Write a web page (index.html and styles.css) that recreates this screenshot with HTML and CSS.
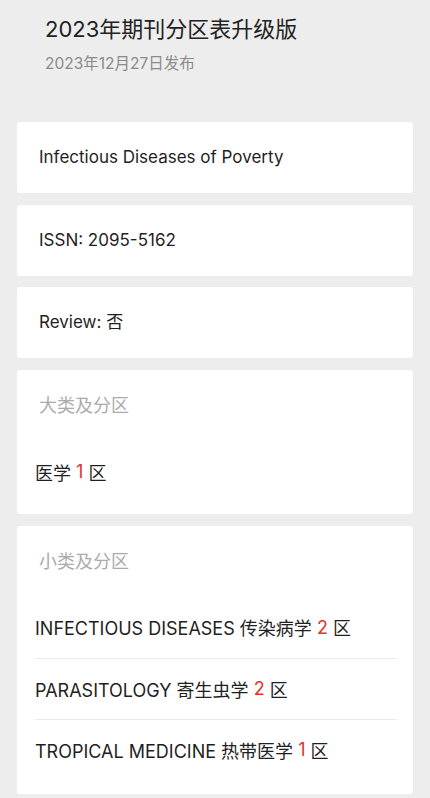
FILE: index.html
```html
<!DOCTYPE html>
<html lang="zh">
<head>
<meta charset="utf-8">
<title>2023年期刊分区表升级版</title>
<link rel="stylesheet" href="styles.css">
</head>
<body>
<div class="page">
  <header class="head">
    <h1 class="title">2023年期刊分区表升级版</h1>
    <div class="date">2023年12月27日发布</div>
  </header>
  <section class="card simple">Infectious Diseases of Poverty</section>
  <section class="card simple">ISSN: 2095-5162</section>
  <section class="card simple">Review: 否</section>
  <section class="card group">
    <div class="label">大类及分区</div>
    <div class="rows">
      <div class="row">医学 <span class="zone">1</span> 区</div>
    </div>
  </section>
  <section class="card group last">
    <div class="label">小类及分区</div>
    <div class="rows">
      <div class="row">INFECTIOUS DISEASES 传染病学 <span class="zone">2</span> 区</div>
      <div class="row">PARASITOLOGY 寄生虫学 <span class="zone">2</span> 区</div>
      <div class="row">TROPICAL MEDICINE 热带医学 <span class="zone">1</span> 区</div>
    </div>
  </section>
</div>
</body>
</html>
```

FILE: styles.css
```css
* { box-sizing: border-box; }
html, body { margin: 0; padding: 0; }
body {
  background: #ededed;
  font-family: Inter, "Noto Sans CJK SC", sans-serif;
  color: #1f1f1f;
}
.page {
  display: flex;
  flex-direction: column;
  gap: 11.7px;
  padding: 0 17px 20px;
}
.head {
  padding: 14px 0 37px 28px;
  margin-bottom: -0.7px;
}
.title {
  margin: 0;
  font-size: 22px;
  font-weight: 400;
  line-height: 30px;
  color: #222;
}
.date {
  margin-top: 10px;
  font-size: 15.5px;
  line-height: 20px;
  color: #8a8a8a;
}
.card {
  background: #fff;
  border-radius: 3px;
}
.simple {
  padding: 24px 22px;
  font-size: 17px;
  line-height: 23px;
  height: 71px;
}
.group {
  padding: 24px 16px 12px 18px;
  display: flex;
  flex-direction: column;
  gap: 23px;
}
.group.last { padding-bottom: 14px; }
.label {
  padding-left: 4px;
  font-size: 18px;
  line-height: 24px;
  color: #ababab;
}
.rows {
  display: flex;
  flex-direction: column;
}
.row {
  height: 61px;
  display: flex;
  align-items: center;
  font-size: 18px;
  color: #1f1f1f;
  white-space: pre;
  border-top: 1px solid #ececec;
}
.row:first-child { border-top: none; }
.zone { color: #e2322e; }
```
